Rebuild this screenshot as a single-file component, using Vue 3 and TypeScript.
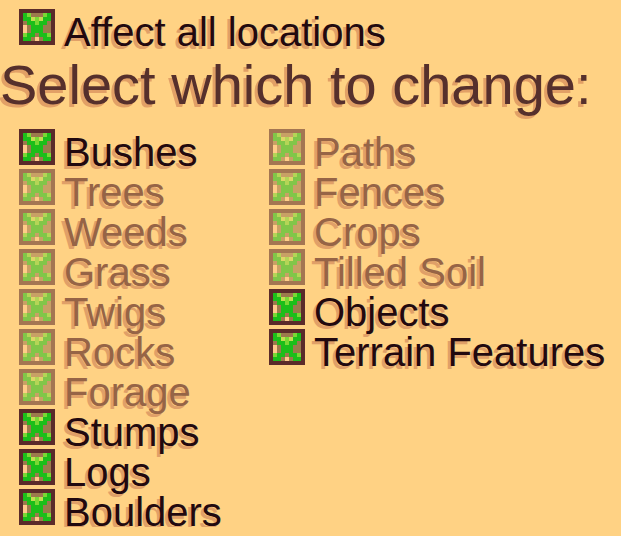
<script setup lang="ts">
import { reactive, ref } from 'vue'

interface Option {
  name: string
  checked: boolean
  faded?: boolean
}

const all = reactive<Option>({ name: 'Affect all locations', checked: true })

const make = (name: string, faded = false): Option => ({ name, checked: true, faded })

const columns = ref<Option[][]>([
  [
    make('Bushes'),
    make('Trees', true),
    make('Weeds', true),
    make('Grass', true),
    make('Twigs', true),
    make('Rocks', true),
    make('Forage', true),
    make('Stumps'),
    make('Logs'),
    make('Boulders'),
  ],
  [
    make('Paths', true),
    make('Fences', true),
    make('Crops', true),
    make('Tilled Soil', true),
    make('Objects'),
    make('Terrain Features'),
  ],
])

// 7x7 inside of the box: g green, l lime, y pale yellow, p peach, b brown
const sprite = [
  'glbbblg',
  'ggylygg',
  'bgglggb',
  'pbgggbb',
  'pbgggbb',
  'lggbggl',
  'ggbpbgg',
]
const fills: Record<string, string> = {
  g: '#1cbe1a',
  l: '#7ad834',
  y: '#c4dc50',
  p: '#ffc98a',
  b: '#9c7a4c',
}
const cells = sprite.flatMap((row, y) =>
  [...row].map((key, x) => ({ id: `${x}-${y}`, x: x + 1, y: y + 1, fill: fills[key] })),
)
</script>

<template>
  <main class="menu">
    <label class="option">
      <span class="box">
        <input v-model="all.checked" type="checkbox" />
        <svg v-if="all.checked" viewBox="0 0 9 9" shape-rendering="crispEdges" aria-hidden="true">
          <rect v-for="c in cells" :key="c.id" :x="c.x" :y="c.y" width="1" height="1" :fill="c.fill" />
        </svg>
      </span>
      <span class="name">{{ all.name }}</span>
    </label>
    <h1>Select which to change:</h1>
    <div class="columns">
      <div v-for="(column, i) in columns" :key="i" class="column">
        <label v-for="o in column" :key="o.name" class="option" :class="{ faded: o.faded }">
          <span class="box">
            <input v-model="o.checked" type="checkbox" />
            <svg v-if="o.checked" viewBox="0 0 9 9" shape-rendering="crispEdges" aria-hidden="true">
              <rect v-for="c in cells" :key="c.id" :x="c.x" :y="c.y" width="1" height="1" :fill="c.fill" />
            </svg>
          </span>
          <span class="name">{{ o.name }}</span>
        </label>
      </div>
    </div>
  </main>
</template>

<style>
body {
  margin: 0;
  background: #ffd284;
}
</style>

<style scoped>
.menu {
  padding-top: 7px;
  font-family: "Liberation Sans", Arial, sans-serif;
  color: #22090f;
}
.menu > .option {
  margin-left: 19px;
}
h1 {
  margin: 0;
  height: 80px;
  font-size: 56px;
  line-height: 76px;
  font-weight: 400;
  white-space: nowrap;
  color: #56302c;
  text-shadow: -3px 3px 0 #e2a066;
}
.columns {
  display: grid;
  grid-template-columns: 250px 1fr;
  padding-left: 19px;
}
.column {
  display: flex;
  flex-direction: column;
}
.option {
  display: flex;
  align-items: center;
  gap: 9px;
  height: 40px;
}
.box {
  display: grid;
  flex: none;
  width: 36px;
  height: 36px;
}
.box > * {
  grid-area: 1 / 1;
  width: 36px;
  height: 36px;
}
.box svg {
  pointer-events: none;
}
input {
  appearance: none;
  box-sizing: border-box;
  margin: 0;
  border: 4px solid #5b2b2a;
  background: #9c7a4c;
}
.name {
  padding-top: 10px;
  font-size: 40px;
  line-height: 40px;
  white-space: nowrap;
  text-shadow: -3px 3px 0 #e0a068;
}
.faded .box {
  opacity: 0.55;
}
.faded .name {
  color: #966446;
}
</style>
